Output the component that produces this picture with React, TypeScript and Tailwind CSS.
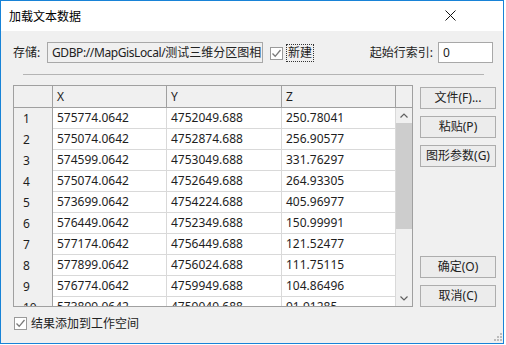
import React from "react";

const rows: [string, string, string, string][] = [
  ["1", "575774.0642", "4752049.688", "250.78041"],
  ["2", "575074.0642", "4752874.688", "256.90577"],
  ["3", "574599.0642", "4753049.688", "331.76297"],
  ["4", "575074.0642", "4752649.688", "264.93305"],
  ["5", "573699.0642", "4754224.688", "405.96977"],
  ["6", "576449.0642", "4752349.688", "150.99991"],
  ["7", "577174.0642", "4756449.688", "121.52477"],
  ["8", "577899.0642", "4756024.688", "111.75115"],
  ["9", "576774.0642", "4759949.688", "104.86496"],
  ["10", "573899.0642", "4759049.688", "91.91285"],
];

function Check() {
  return (
    <div className="w-[13px] h-[13px] border border-[#9a9a9a] bg-white flex items-center justify-center shrink-0">
      <svg width="11" height="11" viewBox="0 0 11 11">
        <path d="M1.5 5.5 L4.2 8.3 L9.5 2" fill="none" stroke="#7a7a7a" strokeWidth="1.3" />
      </svg>
    </div>
  );
}

function Btn({ label }: { label: string }) {
  return (
    <div className="w-[76px] h-[22px] border border-[#adadad] bg-[#ececec] flex items-center justify-center text-[#222] text-[12px] leading-none">
      {label}
    </div>
  );
}

export default function App() {
  return (
    <div className="w-[506px] h-[345px] bg-white font-['Noto_Sans','Noto_Sans_CJK_SC',sans-serif] text-[12px] text-[#1e1e1e]">
      <div className="w-[504px] h-[344px] border border-[#1883d7] flex flex-col">
        {/* title bar */}
        <div className="h-[30px] bg-white flex items-center pl-[8px] pr-[47px] shrink-0">
          <span className="flex-1 text-[12px] text-black font-['Noto_Sans_CJK_SC',sans-serif]">加载文本数据</span>
          <svg width="11" height="11" viewBox="0 0 11 11" className="mt-[-1px]">
            <path d="M0.5 0.5 L10.5 10.5 M10.5 0.5 L0.5 10.5" stroke="#111" strokeWidth="1" />
          </svg>
        </div>
        {/* body */}
        <div className="flex-1 bg-[#f0f0f0] relative flex flex-col pt-[11px]">
          {/* row 1 */}
          <div className="flex items-center h-[21px] pl-[12px] pr-[10px]">
            <span className="w-[34px] shrink-0 text-[#222]">存储:</span>
            <div className="w-[216px] h-[21px] border border-[#a8a8a8] bg-[#f0f0f0] flex items-center pl-[4px] overflow-hidden whitespace-nowrap text-[#222] shrink-0">
              <span className="tracking-[-0.4px]">GDBP://MapGisLocal/</span>
              <span>测试三维分区图相</span>
            </div>
            <div className="ml-[7px] mt-[1px]">
              <Check />
            </div>
            <div className="ml-[3px] h-[18px] px-[1px] border border-dotted border-[#333] flex items-center text-[#222]">
              新建
            </div>
            <div className="flex-1" />
            <span className="text-[#222]">起始行索引:</span>
            <div className="ml-[5px] w-[55px] h-[21px] border border-[#a8a8a8] bg-white flex items-center pl-[4px] text-[#222]">
              0
            </div>
          </div>
          {/* separator */}
          <div className="mt-[11px] ml-[22px] mr-[19px] h-px bg-[#b4b4b4]" />
          {/* main */}
          <div className="mt-[10px] flex pl-[12px]">
            {/* table */}
            <div className="w-[400px] h-[222px] border border-[#a0a0a0] flex flex-col overflow-hidden">
              <div className="flex h-[22px] shrink-0 bg-[#f0f0f0] border-b border-[#a0a0a0]">
                <div className="w-[39px] border-r border-[#a0a0a0]" />
                <div className="w-[114px] border-r border-[#a0a0a0] pl-[4px] flex items-center">X</div>
                <div className="w-[115px] border-r border-[#a0a0a0] pl-[4px] flex items-center">Y</div>
                <div className="w-[114px] border-r border-[#a0a0a0] pl-[4px] flex items-center">Z</div>
                <div className="flex-1" />
              </div>
              <div className="flex flex-1 min-h-0">
                <div className="w-[382px] overflow-hidden flex flex-col">
                  {rows.map((r) => (
                    <div key={r[0]} className="flex h-[21px] shrink-0">
                      <div className="w-[39px] bg-[#f0f0f0] border-r border-[#a0a0a0] pl-[9px] flex items-center">{r[0]}</div>
                      <div className="w-[114px] bg-white border-r border-b border-[#d9d9d9] pl-[4px] flex items-center">{r[1]}</div>
                      <div className="w-[115px] bg-white border-r border-b border-[#d9d9d9] pl-[4px] flex items-center">{r[2]}</div>
                      <div className="w-[114px] bg-white border-r border-b border-[#d9d9d9] pl-[4px] flex items-center">{r[3]}</div>
                    </div>
                  ))}
                </div>
                <div className="w-[16px] bg-[#f0f0f0] flex flex-col">
                  <div className="h-[15px] flex items-center justify-center">
                    <svg width="8" height="5" viewBox="0 0 8 5">
                      <path d="M0.5 4.5 L4 1 L7.5 4.5" fill="none" stroke="#606060" strokeWidth="1.2" />
                    </svg>
                  </div>
                  <div className="h-[106px] bg-[#cdcdcd]" />
                  <div className="flex-1" />
                  <div className="h-[16px] flex items-center justify-center">
                    <svg width="8" height="5" viewBox="0 0 8 5">
                      <path d="M0.5 0.5 L4 4 L7.5 0.5" fill="none" stroke="#606060" strokeWidth="1.2" />
                    </svg>
                  </div>
                </div>
              </div>
            </div>
            {/* buttons */}
            <div className="ml-[7px] h-[222px] flex flex-col justify-between">
              <div className="flex flex-col gap-[7px] pt-[2px]">
                <Btn label="文件(F)..." />
                <Btn label="粘贴(P)" />
                <Btn label="图形参数(G)" />
              </div>
              <div className="flex flex-col gap-[7px]">
                <Btn label="确定(O)" />
                <Btn label="取消(C)" />
              </div>
            </div>
          </div>
          {/* bottom checkbox */}
          <div className="mt-[10px] ml-[13px] flex items-center h-[13px]">
            <Check />
            <span className="ml-[4px] text-[#222]">结果添加到工作空间</span>
          </div>
          {/* resize grip */}
          <svg width="10" height="10" viewBox="0 0 10 10" className="absolute right-[0px] bottom-[1px]">
            <rect x="7" y="1" width="2" height="2" fill="#bcbcbc" />
            <rect x="4" y="4" width="2" height="2" fill="#bcbcbc" />
            <rect x="7" y="4" width="2" height="2" fill="#bcbcbc" />
            <rect x="1" y="7" width="2" height="2" fill="#bcbcbc" />
            <rect x="4" y="7" width="2" height="2" fill="#bcbcbc" />
            <rect x="7" y="7" width="2" height="2" fill="#bcbcbc" />
          </svg>
        </div>
      </div>
    </div>
  );
}
